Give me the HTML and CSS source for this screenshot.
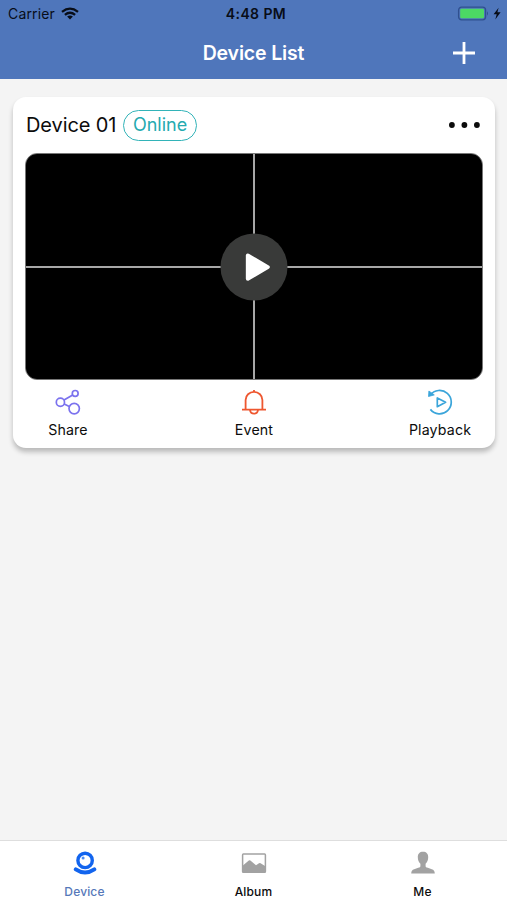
FILE: index.html
```html
<!DOCTYPE html>
<html lang="en">
<head>
<meta charset="utf-8">
<meta name="viewport" content="width=device-width, initial-scale=1">
<title>Device List</title>
<link rel="stylesheet" href="styles.css">
</head>
<body>
<div class="app">
  <header class="header">
    <div class="status">
      <div class="carrier"><span>Carrier</span>
        <svg width="18" height="13" viewBox="0 0 18 13" fill="none" stroke="#080d18" stroke-width="2.3"><path d="M1 4.8Q9-1.6 17 4.8M3.9 7.8Q9 3.6 14.1 7.8"/><path d="M6.1 9.6Q9 7.3 11.9 9.6L9 12.6Z" fill="#080d18" stroke="none"/></svg>
      </div>
      <span class="time">4:48 PM</span>
      <div class="battery">
        <svg width="44" height="16" viewBox="0 0 44 16"><rect x="1.6" y="1.2" width="27" height="12.6" rx="3" fill="none" stroke="#30508f" stroke-width="1.3"/><rect x="3.2" y="2.7" width="23.8" height="9.6" rx="1.4" fill="#4cd964"/><path d="M30 5.3q2 2.2 0 4.4z" fill="#30508f"/><path d="M41.6 1.7 36.6 8.2h3.1l-1.4 5.4 5.3-7.3h-3.2z" fill="#080d18"/></svg>
      </div>
    </div>
    <div class="navbar">
      <h1>Device List</h1>
      <button class="add" aria-label="Add device"><svg width="22" height="22" viewBox="0 0 22 22" stroke="#fff" stroke-width="2.8"><path d="M11 0v22M0 11h22"/></svg></button>
    </div>
  </header>

  <main class="content">
    <section class="card">
      <div class="card-head">
        <h2>Device 01</h2>
        <span class="badge">Online</span>
        <button class="more" aria-label="More"><svg width="34" height="8" viewBox="0 0 34 8" fill="#0c0c0c"><circle cx="2.9" cy="4" r="2.9"/><circle cx="15.4" cy="4" r="2.9"/><circle cx="27.9" cy="4" r="2.9"/></svg></button>
      </div>
      <div class="video">
        <span class="feed"></span><span class="feed"></span><span class="feed"></span><span class="feed"></span>
        <button class="play" aria-label="Play"><svg width="67" height="67" viewBox="0 0 68 68"><path d="M27.7 22.3v23.6L48 34.1z" fill="#fff" stroke="#fff" stroke-width="4" stroke-linejoin="round"/></svg></button>
      </div>
      <div class="actions">
        <a class="action"><svg width="28" height="28" viewBox="0 0 28 28" fill="none" stroke="#7b72ee" stroke-width="1.7"><circle cx="6.4" cy="14.2" r="4.1"/><circle cx="21.2" cy="5.4" r="2.9"/><circle cx="20.2" cy="20.6" r="5.2"/><path d="m10 12.1 8.7-5.2M10.2 15.9l5.1 2.5"/></svg><span>Share</span></a>
        <a class="action"><svg width="28" height="28" viewBox="0 0 28 28" fill="none" stroke="#ee5730" stroke-width="1.8"><path d="M5.6 21.5V12a8.4 8.1 0 0 1 16.8 0v9.5M2 21.6h24M14 2v2M10 22.2q.5 3.5 4 3.5t4-3.5"/></svg><span>Event</span></a>
        <a class="action"><svg width="28" height="28" viewBox="0 0 28 28" fill="none" stroke="#3ba5da" stroke-width="1.7"><path d="M4.2 7.1A11.7 11.7 0 1 1 4.4 21.4"/><path d="M2.9 3 8.3 6.9 2.5 8.5z" fill="#3ba5da" stroke-width=".8"/><path d="M11.3 9.9v8.8l8.3-4.4z" stroke-linejoin="round"/></svg><span>Playback</span></a>
      </div>
    </section>
  </main>

  <nav class="tabs">
    <a class="tab active"><svg width="28" height="28" viewBox="0 0 28 28" fill="none" stroke="#1264ee"><circle cx="14.1" cy="11.4" r="7.2" stroke-width="3.4"/><path d="M4.8 20.3Q14 26.6 23.3 20.3" stroke-width="4" stroke-linecap="round"/><circle cx="12.1" cy="9.1" r="1.5" fill="#4c8cf2" stroke="none"/></svg><span>Device</span></a>
    <a class="tab"><svg width="28" height="28" viewBox="0 0 28 28"><rect x="2.6" y="5.1" width="22.8" height="18.2" rx=".8" fill="#fff" stroke="#a2a2a2" stroke-width="1.5"/><path d="M2.6 16.8 8.8 11.5q.8-.6 1.6 0l5.6 4.7 3-2q.8-.5 1.6 0l4.8 3v6.1H2.6z" fill="#a2a2a2"/></svg><span>Album</span></a>
    <a class="tab"><svg width="28" height="28" viewBox="0 0 28 28" fill="#a2a2a2"><path d="M14 2.7c3.3 0 5.2 2 5.2 5.3 0 3.2-1 5.4-2.6 6.8v2.1c0 1 .7 1.4 2.2 1.9l4 1.4c2.1.7 2.8 1.6 3 4.3H2.2c.2-2.7.9-3.6 3-4.3l4-1.4c1.500-.5 2.200-.9 2.200-1.900v-2.100C9.800 13.400 8.800 11.200 8.800 8c0-3.300 1.900-5.300 5.200-5.300z"/></svg><span>Me</span></a>
  </nav>
</div>
</body>
</html>
```
FILE: styles.css
```css
* { box-sizing: border-box; }
body { margin: 0; background: #f4f4f4; color: #0c0c0c; font-family: Inter, "Liberation Sans", sans-serif; }
h1, h2 { margin: 0; font-weight: 400; }
button { border: 0; padding: 0; background: none; font: inherit; }
svg { display: block; flex: none; }
.app { display: flex; flex-direction: column; height: 900px; }
.header { height: 79px; background: #4f76bb; }
.status { height: 27px; display: grid; grid-template-columns: 1fr auto 1fr; align-items: center; padding: 0 5px 0 8px; color: #080d18; font-size: 14px; line-height: 27px; }
.carrier { display: flex; align-items: center; gap: 6px; letter-spacing: 0.15px; }
.time { padding-left: 2px; font-weight: 600; letter-spacing: 0.4px; }
.battery { display: flex; justify-content: flex-end; padding-right: 1px; }
.navbar { height: 50px; display: grid; grid-template-columns: 1fr auto 1fr; align-items: center; padding: 0 32px; }
h1 { grid-column: 2; color: #fff; font-size: 19.5px; font-weight: 600; line-height: 50px; letter-spacing: -0.15px; padding-top: 1px; }
.add { justify-self: end; }
.content { flex: 1; padding: 18px 12px 0 13px; }
.card { height: 351px; padding: 0 12px 0 13px; border-radius: 13px; background: #fff; box-shadow: 0 4px 5px rgba(0, 0, 0, .24); }
.card-head { height: 56px; display: flex; align-items: center; }
h2 { width: 97px; font-size: 20px; letter-spacing: -0.1px; white-space: nowrap; }
.badge { width: 74px; height: 31px; border: 1.5px solid #32b3b8; border-radius: 16px; color: #25aab0; font-size: 18px; line-height: 28px; text-align: center; }
.more { margin-left: auto; }
.video { position: relative; display: grid; grid-template-columns: 1fr 1fr; grid-template-rows: 1fr 1fr; gap: 2px; height: 227px; margin-left: -1px; border: 1px solid #777; border-radius: 12px; overflow: hidden; background: #a7a7a7; }
.feed { background: #000; }
.play { position: absolute; left: 50%; top: 50%; width: 67px; height: 67px; transform: translate(-50%, -50%); border-radius: 50%; background: #393a39; }
.actions { display: flex; justify-content: space-between; padding: 8px 1px 0 0; }
.action { width: 84px; display: flex; flex-direction: column; align-items: center; font-size: 14.2px; line-height: 20px; gap: 4px; letter-spacing: 0.15px; }
.tabs { height: 60px; display: grid; grid-template-columns: repeat(3, 1fr); border-top: 1px solid #dedede; background: #fff; }
.tab { display: flex; flex-direction: column; align-items: center; padding-top: 8px; gap: 7px; font-size: 12px; line-height: 16px; font-weight: 500; letter-spacing: 0.15px; }
.active { color: #5678b9; }
```
